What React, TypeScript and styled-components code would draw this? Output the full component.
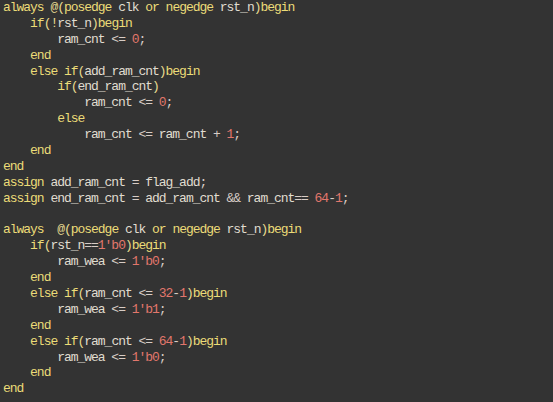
import React from "react";
import styled, { createGlobalStyle } from "styled-components";

const GlobalStyle = createGlobalStyle`
  html, body {
    margin: 0;
    padding: 0;
    background: #333333;
  }
  body {
    width: 553px;
    height: 402px;
    overflow: hidden;
  }
`;

const Editor = styled.pre`
  margin: 0;
  padding: 0 0 0 3px;
  width: 553px;
  height: 402px;
  box-sizing: border-box;
  background: #333333;
  font-family: "Liberation Mono", "DejaVu Sans Mono", monospace;
  font-size: 13px;
  letter-spacing: -1.03px;
  line-height: 15.9px;
  color: #dcdcd4;
  overflow: hidden;
`;

const Line = styled.div`
  height: 15.9px;
  white-space: pre;
`;

type Kind = "kw" | "id" | "num" | "punc" | "op" | "ws";

const colors: Record<Kind, string> = {
  kw: "#ecdc78",
  id: "#e0ddd0",
  num: "#e2776c",
  punc: "#e6da90",
  op: "#d8cdc6",
  ws: "inherit",
};

const Token = styled.span<{ $kind: Kind }>`
  color: ${(p) => colors[p.$kind]};
`;

const KEYWORDS = new Set([
  "always",
  "posedge",
  "negedge",
  "or",
  "if",
  "else",
  "begin",
  "end",
  "assign",
]);

const code = [
  "always @(posedge clk or negedge rst_n)begin",
  "    if(!rst_n)begin",
  "        ram_cnt <= 0;",
  "    end",
  "    else if(add_ram_cnt)begin",
  "        if(end_ram_cnt)",
  "            ram_cnt <= 0;",
  "        else",
  "            ram_cnt <= ram_cnt + 1;",
  "    end",
  "end",
  "assign add_ram_cnt = flag_add;",
  "assign end_ram_cnt = add_ram_cnt && ram_cnt== 64-1;",
  "",
  "always  @(posedge clk or negedge rst_n)begin",
  "    if(rst_n==1'b0)begin",
  "        ram_wea <= 1'b0;",
  "    end",
  "    else if(ram_cnt <= 32-1)begin",
  "        ram_wea <= 1'b1;",
  "    end",
  "    else if(ram_cnt <= 64-1)begin",
  "        ram_wea <= 1'b0;",
  "    end",
  "end",
];

function tokenize(line: string): { text: string; kind: Kind }[] {
  const re = /(\s+)|(\d+'b\d+)|(\d+)|([A-Za-z_][A-Za-z0-9_]*)|([()@!])|([^\sA-Za-z0-9_()@!]+)/g;
  const out: { text: string; kind: Kind }[] = [];
  let m: RegExpExecArray | null;
  while ((m = re.exec(line))) {
    if (m[1]) out.push({ text: m[1], kind: "ws" });
    else if (m[2] || m[3]) out.push({ text: m[0], kind: "num" });
    else if (m[4]) out.push({ text: m[4], kind: KEYWORDS.has(m[4]) ? "kw" : "id" });
    else if (m[5]) out.push({ text: m[5], kind: "punc" });
    else out.push({ text: m[0], kind: "op" });
  }
  return out;
}

export default function App() {
  return (
    <>
      <GlobalStyle />
      <Editor>
        {code.map((line, i) => (
          <Line key={i}>
            {line === ""
              ? " "
              : tokenize(line).map((t, j) => (
                  <Token key={j} $kind={t.kind}>
                    {t.text}
                  </Token>
                ))}
          </Line>
        ))}
      </Editor>
    </>
  );
}
